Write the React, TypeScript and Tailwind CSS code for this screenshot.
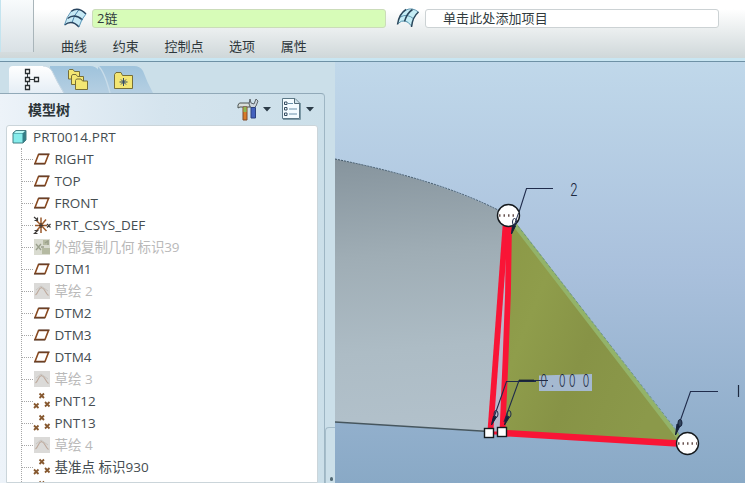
import clsx from "clsx";

type NodeKind = "plane" | "csys" | "geom" | "sketch" | "point";

const treeNodes: { label: string; kind: NodeKind; dim?: boolean }[] = [
    { label: "RIGHT", kind: "plane" },
    { label: "TOP", kind: "plane" },
    { label: "FRONT", kind: "plane" },
    { label: "PRT_CSYS_DEF", kind: "csys" },
    { label: "外部复制几何 标识39", kind: "geom", dim: true },
    { label: "DTM1", kind: "plane" },
    { label: "草绘 2", kind: "sketch", dim: true },
    { label: "DTM2", kind: "plane" },
    { label: "DTM3", kind: "plane" },
    { label: "DTM4", kind: "plane" },
    { label: "草绘 3", kind: "sketch", dim: true },
    { label: "PNT12", kind: "point" },
    { label: "PNT13", kind: "point" },
    { label: "草绘 4", kind: "sketch", dim: true },
    { label: "基准点 标识930", kind: "point" },
    { label: "", kind: "point" },
];

function NodeIcon({ kind }: { kind: NodeKind }) {
    return (
        <svg className="w-[18px] h-[20px] shrink-0" viewBox="0 0 18 20" fill="none">
            {kind === "plane" && (
                <>
                    <path d="M5.5 5.5H15.500L12 14.5H2Z" stroke="#8a4a20" strokeWidth="1.6" />
                    <path d="M5.5 5H16.5M1 15H12" stroke="#4a3428" strokeWidth="0.9" />
                </>
            )}
            {kind === "csys" && (
                <>
                    <path d="M8 2.5V18M2 10.5H14M3.5 5.5L13.5 16M13 4.5L3.5 16" stroke="#9a5a2c" strokeWidth="1.5" />
                    <path d="M1 2L4.5 5M4.5 2.5V5.5H1.5M8 8V13M6 10.5H10.5M14 9L17.5 12.5M17.5 9L14 12.5M1.5 15.5H4.5L1.5 18.5H4.5" stroke="#3d3a38" strokeWidth="1.2" />
                </>
            )}
            {kind === "geom" && (
                <>
                    <path d="M1 2H17V18H1Z" fill="#d9dbd0" />
                    <path d="M10 3H16V8H10ZM9 11H17V17H9Z" fill="#b5baa2" />
                    <path d="M3 7L8 13M8 7L3 13M12 6L15 4V8M8 10H11" stroke="#9aa08c" strokeWidth="1.3" />
                </>
            )}
            {kind === "sketch" && (
                <>
                    <path d="M1 2H17V18H1Z" fill="#dbdad8" />
                    <path d="M2.5 14C5.500 12 5 7.500 8.500 6.500C12 7 12 12 15.500 14.500" stroke="#bda99c" strokeWidth="1.1" />
                    <path d="M3 9L8 5L15 10" stroke="#c8c5c1" />
                </>
            )}
            {kind === "point" && (
                <path
                    d="M6.500 2.500L11 7M11 2.500L6.500 7M1 12.500L5.500 17M5.500 12.500L1 17M12 11L16.500 15.500M16.500 11L12 15.500"
                    stroke="#86582f"
                    strokeWidth="1.8"
                />
            )}
        </svg>
    );
}

function CurveIcon() {
    return (
        <svg className="w-[24px] h-[22px]" viewBox="0 0 24 22" fill="none">
            <path d="M1.500 18Q9 12 16 20L23 7Q15 -1 8 4.500Z" fill="#c6e9f5" />
            <path d="M9 15.500Q11 8 16 2.500" stroke="#4b82a8" />
            <path d="M1.500 18Q9 12 16 20M4.500 11.500Q12 6 19.500 13M8 4.500Q15 -1 23 7" stroke="#28445f" strokeWidth="1.5" />
            <path d="M1.500 18Q3.500 10 8 4.500M16 20Q18 12 23 7" stroke="#6099b9" />
        </svg>
    );
}

function CrossCurveIcon() {
    return (
        <svg className="w-[24px] h-[22px]" viewBox="0 0 24 22" fill="none">
            <path d="M2 17Q4 6 10 3Q16 1 22.500 5Q18 8 16 19.500Q8 11 2 17Z" fill="#c5edf5" />
            <path d="M4.500 10Q11 6 18 12M10 3Q16 0 22.500 5M2 16.500Q9 10 15.500 19" stroke="#5b94af" />
            <path d="M1.500 17.500Q3 7 10 2.500M8.500 14.500Q11 6 16.500 2.500M15.500 20Q16.500 10 22.500 5" stroke="#29465a" strokeWidth="1.5" />
        </svg>
    );
}

function Toolbar() {
    return (
        <header className="h-[62px] shrink-0 flex bg-linear-to-b from-white from-15% to-[#ccd5d7] border-b border-[#6e91a5] relative">
            <div className="w-[34px] shrink-0 h-[52px] bg-linear-to-b from-[#f8fbfc] to-[#d9e1e5] border-l border-[#c4e4ef] border-r border-r-[#a9b5ba]" />
            <div className="flex-1 pt-2">
                <div className="flex items-center h-5 text-[13px] text-[#303a3d]">
                    <div className="w-[58px] pl-[29px] shrink-0">
                        <CurveIcon />
                    </div>
                    <div className="w-[294px] h-[19px] rounded-[3px] border border-[#cbdcb9] bg-[#d7fcb8] pl-1 leading-[17px] shrink-0">2链</div>
                    <div className="w-[39px] pl-[10px] shrink-0">
                        <CrossCurveIcon />
                    </div>
                    <div className="w-[294px] h-[19px] rounded-[3px] border border-[#ccd2d4] bg-white pl-[17px] leading-[17px] tracking-[0.1px] shrink-0">单击此处添加项目</div>
                </div>
                <nav className="flex gap-[25.700px] pl-[27px] mt-2 text-[13px] leading-5 text-[#2e373b]">
                    <span>曲线</span>
                    <span>约束</span>
                    <span>控制点</span>
                    <span>选项</span>
                    <span>属性</span>
                </nav>
            </div>
            <div className="absolute inset-x-0 bottom-0 h-[3px] bg-[#c9e6f2]" />
        </header>
    );
}

function TabStrip() {
    return (
        <svg className="block w-[335px] h-[31px]" viewBox="0 62 335 31" fill="none">
            <defs>
                <linearGradient id="tab" x1="0" y1="0" x2="0" y2="1">
                    <stop stopColor="#fff" />
                    <stop offset="1" stopColor="#e4edf5" />
                </linearGradient>
                <linearGradient id="tabBack" x1="0" y1="0" x2="0" y2="1">
                    <stop stopColor="#9fc3dc" />
                    <stop offset="1" stopColor="#b5cfe2" />
                </linearGradient>
            </defs>
            <path d="M98 93V66H134Q140 66 143 71Q147 82 153 93Z" fill="url(#tabBack)" />
            <path d="M98 66Q104 70 110 93" stroke="#c8dce9" strokeWidth="1.500" />
            <path d="M50 93V66H90Q96 66 99 71Q103 82 109 93Z" fill="url(#tabBack)" />
            <path d="M9 94V70Q9 66 13 66H43Q49 66 52 71Q57 82 64 94Z" fill="url(#tab)" />
            <path d="M43 66Q49 66 52 71Q57 82 64 93" stroke="#c9d9e4" />
            <path d="M27.500 71V88M27.500 79.500H35" stroke="#343b3e" />
            <path d="M25.500 69.500H29.500V73.500H25.500ZM25.500 77.500H29.500V81.500H25.500ZM25.500 85.500H29.500V89.500H25.500ZM34.500 77.500H38.500V81.500H34.500Z" fill="#fff" stroke="#282e31" strokeWidth="1.300" />
            <g fill="#f3e673" stroke="#776f38">
                <path d="M68.500 79V70.500L69.500 69.500H73L74.500 71.500H79.500V79Z" />
                <path d="M71.500 84.500V76L72.500 74.500H76L77.500 76.500H83.500V84.500Z" />
                <path d="M75.500 89.500V80.500L76.500 79H81L82.500 81H87.500V89.500Z" />
                <path d="M114.500 88.500V74.500L116 72.500H121L122.500 75.500H132.500V88.500Z" />
            </g>
            <path d="M123.500 78V86M119.500 82H127.500M121 79.500L126 84.500M126 79.500L121 84.500" stroke="#334a68" />
        </svg>
    );
}

function HeaderTools() {
    return (
        <svg className="w-[80px] h-[26px]" viewBox="236 97 80 26" fill="none">
            <path d="M238 105Q239 102 242 103H250V107H240L238 108Z" fill="#d9dedb" stroke="#4c5452" />
            <path d="M243 107H247V120H243Z" fill="#d97b28" stroke="#7f4a2d" />
            <path d="M243.500 107H246.500V112H243.500Z" fill="#8ab956" />
            <path d="M250 99L251 103L254 104L256 99L258 101L256 106L254 108H251L249 104Z" fill="#cbd3db" stroke="#5c6368" />
            <path d="M251 107.500H255.500V118H251Z" fill="#4361bd" stroke="#2c417f" />
            <path d="M263 107H271L267 111.500ZM306 107H314L310 111.500Z" fill="#2c3c48" />
            <path d="M282.500 98.500H295L299.500 103V118.500H282.500Z" fill="#f4fcff" stroke="#5c7886" />
            <path d="M294.500 99V103.500H299" fill="#cce1e9" stroke="#526a77" />
            <path d="M283 119.500H300.500V103" stroke="#7b98a5" />
            <path d="M288 103.500H293M289 109H297M289 114H297" stroke="#6b91aa" />
            <path d="M284.500 102H287V104.500H284.500ZM284.500 107.500H287V110H284.500ZM284.500 113H287V115.500H284.500Z" stroke="#354d61" />
        </svg>
    );
}

function ModelTree() {
    return (
        <aside className="w-[335px] shrink-0 flex flex-col bg-[#cbdfe9] relative">
            <TabStrip />
            <section className="w-[325px] flex-1 min-h-0 flex flex-col border-t border-r border-t-[#91a9b8] border-r-[#9eb6c4] rounded-tr-[4px] bg-linear-to-r from-[#edf3f9] via-[#d5e4ee] to-[#cbdfe9]">
                <div className="h-[31px] shrink-0 flex items-center justify-between pl-7 pr-2">
                    <h1 className="text-[14px] font-bold text-[#2c3438]">模型树</h1>
                    <HeaderTools />
                </div>
                <div className="ml-[6px] w-[312px] flex-1 min-h-0 overflow-hidden bg-white border border-[#cbd5da] rounded-t-[3px]">
                    <div className="flex items-center h-[22px] pl-[5px] text-[13.5px] tracking-[0.050px] text-[#454d51]">
                        <svg className="w-[15px] h-[16px] mr-[6px]" viewBox="0 0 15 16">
                            <path d="M1 4L4 1.500H14V11L11 14H1Z" fill="#337f88" stroke="#477e83" />
                            <path d="M1.500 4.500H10.500V13.500H1.500Z" fill="#86eceb" />
                            <path d="M2 4L4 2H13L11 4Z" fill="#baf8f5" />
                        </svg>
                        PRT0014.PRT
                    </div>
                    <ul className="ml-[14px] border-l border-dotted border-[#a7a7a7]">
                        {treeNodes.map((node, i) => (
                            <li
                                key={i}
                                className={clsx(
                                    "flex items-center h-[22px] text-[13.5px] whitespace-nowrap",
                                    node.dim ? "text-[#b9b9b9]" : "text-[#454d51]"
                                )}
                            >
                                <span className="w-[11px] border-t border-dotted border-[#a7a7a7]" />
                                <NodeIcon kind={node.kind} />
                                <span className={clsx("ml-[3.500px]", node.kind === "geom" ? "tracking-[-0.2px]" : "tracking-normal")}>
                                    {node.label}
                                </span>
                            </li>
                        ))}
                    </ul>
                </div>
            </section>
            {/* collapsed pane edge */}
            <div className="absolute right-0 bottom-0 w-[10px] h-[56px] rounded-tl-[4px] border-t border-l border-[#a5bdca] bg-[#cbdfe9]">
                <div className="absolute left-[4px] bottom-[2px] w-[3px] h-[4px] rounded-full bg-[#526a76]" />
            </div>
        </aside>
    );
}

function Viewport() {
    return (
        <main className="w-[410px] shrink-0 bg-linear-to-b from-[#c0d8ea] via-[#a9c0dc] to-[#89a9c6]">
            <svg className="block w-[410px] h-[421px]" viewBox="335 62 410 421" fill="none">
                <defs>
                    <linearGradient id="body" x1="0.3" y1="0" x2="0.35" y2="1">
                        <stop stopColor="#87959e" />
                        <stop offset="0.35" stopColor="#9fadb5" />
                        <stop offset="0.7" stopColor="#adbcc5" />
                        <stop offset="1" stopColor="#b2c1cb" />
                    </linearGradient>
                    <linearGradient id="fin" x1="0" y1="0" x2="1" y2="0.5">
                        <stop stopColor="#8b9846" />
                        <stop offset="0.3" stopColor="#8f9d4b" />
                        <stop offset="0.6" stopColor="#879346" />
                        <stop offset="1" stopColor="#8b994a" />
                    </linearGradient>
                </defs>
                <path d="M335 159Q440 180 508 215L489 432L335 422Z" fill="url(#body)" />
                <path d="M335 159Q440 180 500 211" stroke="#425767" strokeDasharray="2 1" />
                <path d="M335 422L489 431.500" stroke="#46565e" strokeWidth="1.300" />
                <path d="M509 219L517 227L681 442L503 432Z" fill="url(#fin)" />
                <path d="M515 225L679 438" stroke="#93b369" strokeWidth="4.500" />
                <path d="M518 226L680 435" stroke="#6d9589" strokeDasharray="3 2" />

                {/* picked chain */}
                <path d="M508 222L490 432H502L507 300Z" fill="#b9b8cb" />
                <path d="M505.500 226L490.500 430" stroke="#f91536" strokeWidth="5.800" />
                <path d="M509 226L508 293L505.500 360L502.500 430" stroke="#f91536" strokeWidth="5.800" />
                <path d="M503 433L678 443.500" stroke="#f91536" strokeWidth="6.500" />
                <path d="M493 433H498" stroke="#f91536" strokeWidth="3" />

                <path d="M539 375.500L592 374V391H539Z" fill="#a5b9d0" />
                <g stroke="#202c4b" strokeWidth="1.100">
                    <path d="M553 188.500H526.500L514 228M718 391.500H690.500L677 430" />
                    <path d="M548 380.500H519L504 422M536 381.500H506.500L492 423" />
                </g>
                <path d="M519 380.500H534" stroke="#182335" strokeWidth="1.800" />
                <g fill="#152039" stroke="#152039">
                    <path d="M675.500 435L677 424L680.500 425ZM491.500 425L493.500 416L496.500 417ZM504.500 425L506.500 416L509.500 417Z" />
                    <ellipse cx="680" cy="423" rx="2" ry="3.500" fill="#32445d" />
                </g>
                <g stroke="#202c4b">
                    <ellipse cx="496" cy="414" rx="2" ry="3.500" />
                    <ellipse cx="509" cy="414" rx="2" ry="3.500" />
                </g>

                <g fill="#fff" stroke="#151a1e" strokeWidth="1.400">
                    <circle cx="508.500" cy="215.500" r="11" />
                    <circle cx="687.500" cy="443.500" r="11" />
                    <rect x="484.500" y="428.500" width="9" height="9" />
                    <rect x="497.500" y="427.500" width="9" height="9" />
                </g>
                <path d="M499 215.500H517M678 443.500H697" stroke="#6b5552" strokeWidth="2.500" strokeDasharray="1.500 3" />
                <path d="M518.500 213L513 229" stroke="#202c4b" />
                <path d="M511.500 234L512.500 225L515.500 226Z" fill="#152039" stroke="#152039" />
                <ellipse cx="514.500" cy="222" rx="2" ry="3.500" stroke="#202c4b" />

                <g fill="#1d2940" fontFamily="Inter, sans-serif" fontWeight="300">
                    <text fontSize="17" transform="translate(570 196) scale(0.75 1)">2</text>
                    <text fontSize="17" transform="translate(540.500 387) scale(0.62 1)" x="0 17 30 46 68">0.000</text>
                </g>
                <path d="M738.500 385V397" stroke="#1d2940" strokeWidth="1.200" />
            </svg>
        </main>
    );
}

export default function App() {
    return (
        <div className="w-[746px] h-[483px] overflow-hidden bg-white font-['Open_Sans','Noto_Sans_CJK_SC',sans-serif]">
            <div className="w-[745px] h-full flex flex-col">
                <Toolbar />
                <div className="flex flex-1 min-h-0">
                    <ModelTree />
                    <Viewport />
                </div>
            </div>
        </div>
    );
}
